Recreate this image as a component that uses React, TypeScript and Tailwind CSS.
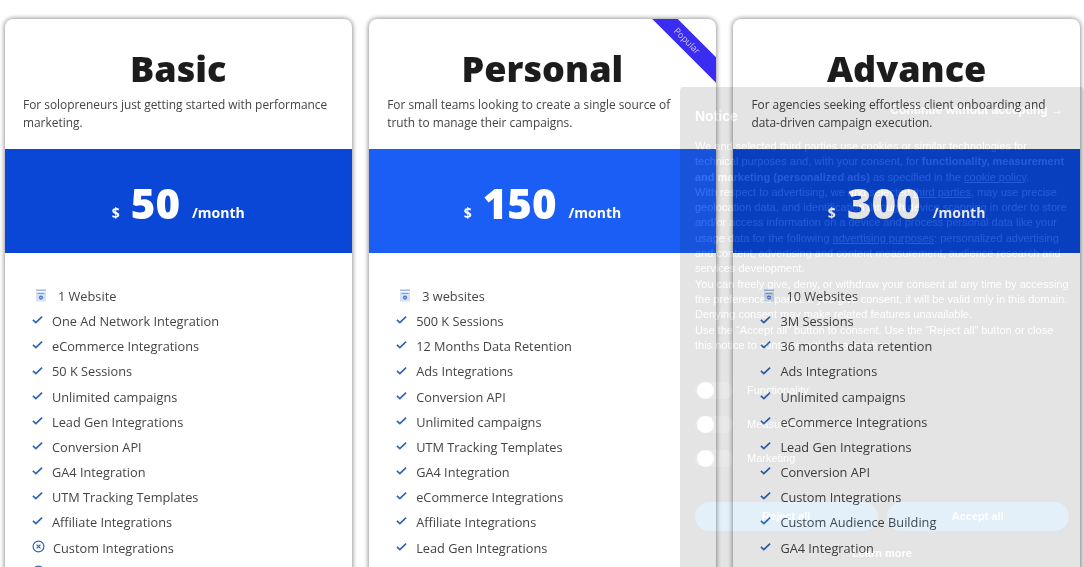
const plans = [
  {
    name: "Basic",
    description: "For solopreneurs just getting started with performance marketing.",
    price: "50",
    band: "bg-[#0a47d6]",
    websites: "1 Website",
    features: [
      "One Ad Network Integration",
      "eCommerce Integrations",
      "50 K Sessions",
      "Unlimited campaigns",
      "Lead Gen Integrations",
      "Conversion API",
      "GA4 Integration",
      "UTM Tracking Templates",
      "Affiliate Integrations",
    ],
    excluded: ["Custom Integrations", "Custom Audience Building"],
  },
  {
    name: "Personal",
    description: "For small teams looking to create a single source of truth to manage their campaigns.",
    price: "150",
    band: "bg-[#1a5ef5]",
    popular: true,
    websites: "3 websites",
    features: [
      "500 K Sessions",
      "12 Months Data Retention",
      "Ads Integrations",
      "Conversion API",
      "Unlimited campaigns",
      "UTM Tracking Templates",
      "GA4 Integration",
      "eCommerce Integrations",
      "Affiliate Integrations",
      "Lead Gen Integrations",
    ],
    excluded: [],
  },
  {
    name: "Advance",
    description: "For agencies seeking effortless client onboarding and data-driven campaign execution.",
    price: "300",
    band: "bg-[#0a47d6]",
    websites: "10 Websites",
    features: [
      "3M Sessions",
      "36 months data retention",
      "Ads Integrations",
      "Unlimited campaigns",
      "eCommerce Integrations",
      "Lead Gen Integrations",
      "Conversion API",
      "Custom Integrations",
      "Custom Audience Building",
      "GA4 Integration",
    ],
    excluded: [],
  },
];

function SiteIcon() {
  return (
    <svg viewBox="0 0 12 13" className="mr-[11px] ml-[3px] h-[13px] w-[12px] shrink-0 -translate-y-[1px]">
      <rect x="1" y="0.5" width="10" height="1.5" fill="#9db8e8" />
      <rect x="1" y="3" width="10" height="9.5" fill="#d5e1f6" />
      <rect x="2.5" y="4" width="7" height="1" fill="#7e9fdc" />
      <circle cx="6" cy="8.6" r="2.1" fill="#4f78c8" />
      <circle cx="6" cy="8.6" r="0.7" fill="#e6edf9" />
    </svg>
  );
}

function CheckIcon() {
  return (
    <svg viewBox="0 0 12 12" className="mr-[9px] h-[11px] w-[11px] shrink-0 -translate-y-[2px]" fill="none">
      <path d="M1 6.3 L4.2 9.3 L11 2.8" stroke="#2f66b8" strokeWidth="1.9" />
    </svg>
  );
}

function CrossCircleIcon() {
  return (
    <svg viewBox="0 0 13 13" className="mr-[8px] h-[13px] w-[13px] shrink-0 -translate-y-[2px]" fill="none">
      <circle cx="6.5" cy="6.5" r="5.4" stroke="#2f64b8" strokeWidth="1.2" />
      <path d="M4.6 4.6 L8.4 8.4 M8.4 4.6 L4.6 8.4" stroke="#2f64b8" strokeWidth="1.2" />
    </svg>
  );
}

function PlanCard({ plan }: { plan: (typeof plans)[number] }) {
  return (
    <div className="relative h-[640px] w-[346.5px] shrink-0 overflow-hidden rounded-[8px] bg-white shadow-[0_0_4px_1px_rgba(0,0,0,0.4)]">
      {plan.popular && (
        <div className="absolute top-[13px] left-[258px] flex h-[18px] w-[120px] rotate-45 items-center justify-center bg-[#3a2cf0] text-[9px] text-[#c9c6fb]">
          Popular
        </div>
      )}
      <h2 className="pt-[26px] text-center text-[36px] leading-[48px] font-extrabold text-[#1c1c1c]">{plan.name}</h2>
      <p className="mt-[2px] h-[54px] px-[18px] text-[11.9px] leading-[18px] text-[#444]">{plan.description}</p>
      <div className={`flex h-[104px] items-center justify-center gap-[11px] pt-[3px] text-white ${plan.band}`}>
        <span className="mt-[20px] text-[14px] font-bold">$</span>
        <span className="text-[42px] leading-none font-extrabold">{plan.price}</span>
        <span className="mt-[20px] ml-[1px] text-[14px] font-bold">/month</span>
      </div>
      <ul className="px-[27px] pt-[31px] text-[12.75px] leading-[25.15px] text-[#444]">
        <li className="flex items-center">
          <SiteIcon />
          {plan.websites}
        </li>
        {plan.features.map((feature) => (
          <li key={feature} className="flex items-center">
            <CheckIcon />
            {feature}
          </li>
        ))}
        {plan.excluded.map((feature) => (
          <li key={feature} className="flex items-center">
            <CrossCircleIcon />
            {feature}
          </li>
        ))}
      </ul>
    </div>
  );
}

function Toggle({ label }: { label: string }) {
  return (
    <div className="flex h-[34px] items-center gap-[14px]">
      <div className="h-[17px] w-[38px] rounded-full bg-[#333] pl-[2px]">
        <div className="h-[17px] w-[17px] rounded-full bg-white" />
      </div>
      <span className="text-[11px]">{label}</span>
    </div>
  );
}

// cookie banner caught mid fade-in, the whole panel sits at 10% opacity
function CookieNotice() {
  return (
    <div className="absolute top-[87px] left-[680px] z-10 h-[480px] w-[404px] rounded-t-[4px] bg-black px-[15px] pt-[20px] text-[11px] leading-[15.3px] text-white opacity-10">
      <div className="flex items-start justify-between">
        <span className="text-[14px] leading-[18px] font-bold">Notice</span>
        <span className="-mt-[4px] pr-[6px] text-[12px] font-bold">Continue without accepting →</span>
      </div>
      <p className="mt-[14px]">
        We and selected third parties use cookies or similar technologies for technical purposes and, with your consent,
        for <b>functionality, measurement and marketing (personalized ads)</b> as specified in the{" "}
        <u>cookie policy</u>.
        <br />
        With respect to advertising, we and selected <u>third parties</u>, may use precise geolocation data, and
        identification through device scanning in order to store and/or access information on a device and process
        personal data like your usage data for the following <u>advertising purposes</u>: personalized advertising and
        content, advertising and content measurement, audience research and services development.
        <br />
        You can freely give, deny, or withdraw your consent at any time by accessing the preferences panel. If you give
        consent, it will be valid only in this domain. Denying consent may make related features unavailable.
        <br />
        Use the “Accept all” button to consent. Use the “Reject all” button or close this notice to continue without
        accepting.
      </p>
      <div className="mt-[20px]">
        <Toggle label="Functionality" />
        <Toggle label="Measurement" />
        <Toggle label="Marketing" />
      </div>
      <div className="mt-[27px] flex gap-[9px]">
        <button className="h-[29px] flex-1 rounded-full bg-[#0073ce] font-bold">Reject all</button>
        <button className="h-[29px] flex-1 rounded-full bg-[#0073ce] font-bold">Accept all</button>
      </div>
      <div className="mt-[15px] text-center font-bold">Learn more</div>
    </div>
  );
}

export default function App() {
  return (
    <div className="relative h-[567px] w-[1084px] overflow-hidden bg-white font-['Open_Sans',sans-serif] blur-[0.35px]">
      <div className="flex gap-[17.7px] pt-[19px] pl-[5px]">
        {plans.map((plan) => (
          <PlanCard key={plan.name} plan={plan} />
        ))}
      </div>
      <div className="font-['Liberation_Sans',sans-serif]">
        <CookieNotice />
      </div>
    </div>
  );
}
